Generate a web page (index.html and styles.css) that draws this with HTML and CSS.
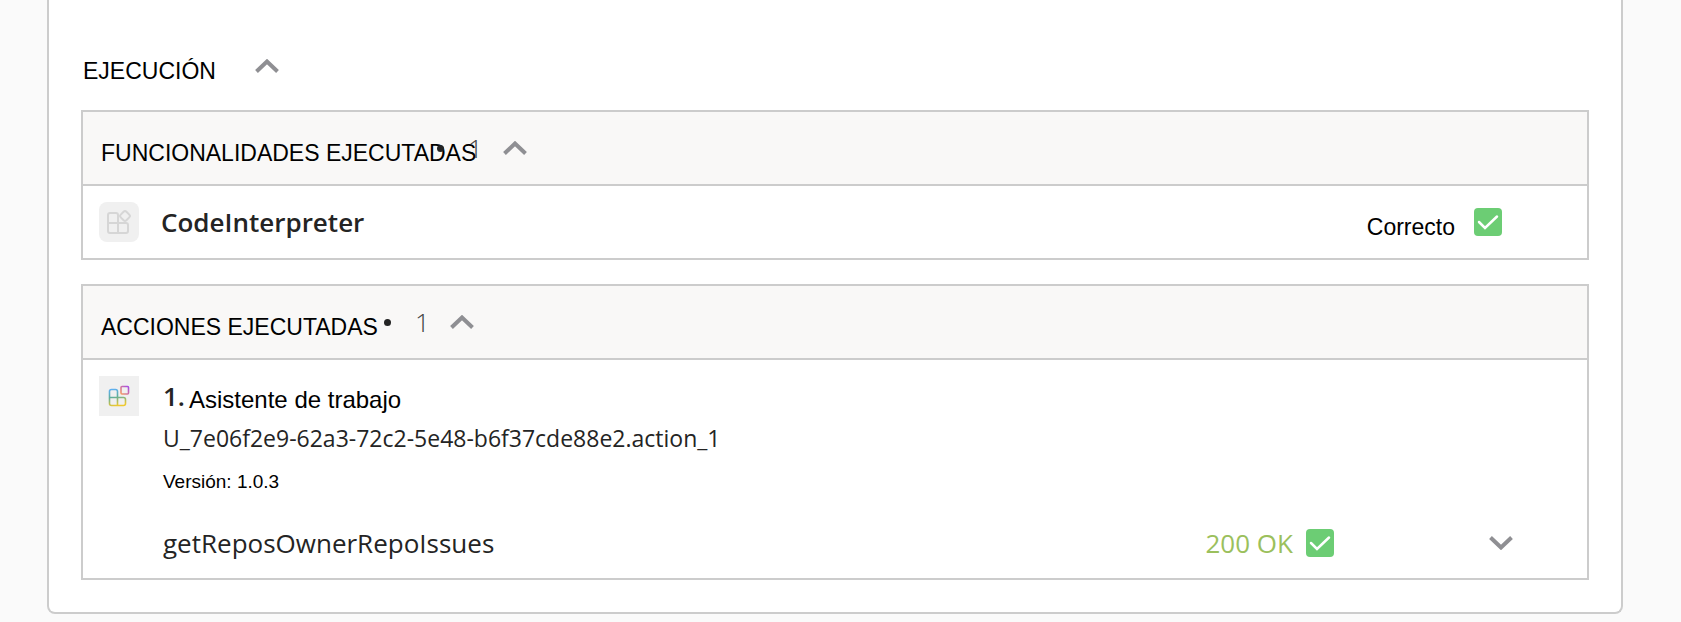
FILE: index.html
```html
<!DOCTYPE html>
<html lang="es">
<head>
    <meta charset="UTF-8">
    <meta name="viewport" content="width=device-width, initial-scale=1.0">
    <title>Ejecución</title>
    <link rel="stylesheet" href="styles.css">
</head>
<body>

    <main class="card">
        <div class="section-head">
            <h1 class="label">EJECUCIÓN</h1>
            <button class="toggle" type="button" aria-label="Contraer ejecución">
                <svg width="24" height="14" viewBox="0 0 24 14"><path d="M1.5 12.5 12 2.5l10.5 10"/></svg>
            </button>
        </div>

        <section class="panel">
            <div class="panel-head">
                <h2 class="label label-overflow">FUNCIONALIDADES EJECUTADAS</h2>
                <span class="dot"></span>
                <span class="count">1</span>
                <button class="toggle" type="button" aria-label="Contraer funcionalidades">
                    <svg width="24" height="14" viewBox="0 0 24 14"><path d="M1.5 12.5 12 2.5l10.5 10"/></svg>
                </button>
            </div>
            <div class="row">
                <span class="app-icon app-icon-round">
                    <svg width="26" height="26" viewBox="0 0 26 26" fill="none" stroke="#d6d6d6" stroke-width="2">
                        <path d="M12 14V6a2 2 0 0 0-2-2H4a2 2 0 0 0-2 2v16a2 2 0 0 0 2 2h16a2 2 0 0 0 2-2v-6a2 2 0 0 0-2-2H2M12 14v10"/>
                        <rect x="15" y="3" width="8" height="8" rx="2" transform="rotate(45 19 7)"/>
                    </svg>
                </span>
                <span class="skill-name">CodeInterpreter</span>
                <span class="status status-skill">
                    <span class="label">Correcto</span>
                    <svg class="check" width="28" height="28" viewBox="0 0 28 28"><rect width="28" height="28" rx="4"/><path d="M5 14l6 6L23 8.5"/></svg>
                </span>
            </div>
        </section>

        <section class="panel">
            <div class="panel-head">
                <h2 class="label">ACCIONES EJECUTADAS</h2>
                <span class="dot"></span>
                <span class="count">1</span>
                <button class="toggle" type="button" aria-label="Contraer acciones">
                    <svg width="24" height="14" viewBox="0 0 24 14"><path d="M1.5 12.5 12 2.5l10.5 10"/></svg>
                </button>
            </div>
            <div class="action">
                <span class="app-icon">
                    <svg width="22" height="22" viewBox="0 0 22 22" fill="none" stroke-width="1.6">
                        <defs>
                            <linearGradient id="blocks" gradientUnits="userSpaceOnUse" x1="4" y1="3" x2="8" y2="21">
                                <stop offset="0" stop-color="#5fb0ff"/>
                                <stop offset="0.5" stop-color="#5fae9c"/>
                                <stop offset="1" stop-color="#efc92f"/>
                            </linearGradient>
                            <linearGradient id="corner" x1="1" y1="0" x2="0" y2="1">
                                <stop offset="0" stop-color="#a44be8"/>
                                <stop offset="1" stop-color="#f59a62"/>
                            </linearGradient>
                        </defs>
                        <path stroke="url(#blocks)" d="M9.5 12.500V6.500A2 2 0 0 0 7.500 4.500h-4A2 2 0 0 0 1.500 6.500v12a2 2 0 0 0 2 2h12a2 2 0 0 0 2-2v-4a2 2 0 0 0-2-2h-14M9.500 12.500v8"/>
                        <rect stroke="url(#corner)" x="13" y="1.500" width="7.500" height="7.500" rx="1"/>
                    </svg>
                </span>
                <div class="details">
                    <div class="action-title">
                        <span class="number">1.</span>
                        <span class="label action-name">Asistente de trabajo</span>
                    </div>
                    <div class="action-id">U_7e06f2e9-62a3-72c2-5e48-b6f37cde88e2.action_1</div>
                    <div class="version">Versión: 1.0.3</div>
                </div>
            </div>
            <div class="row row-operation">
                <span class="operation">getReposOwnerRepoIssues</span>
                <span class="status status-http">
                    <span class="http-code">200 OK</span>
                    <svg class="check" width="28" height="28" viewBox="0 0 28 28"><rect width="28" height="28" rx="4"/><path d="M5 14l6 6L23 8.5"/></svg>
                </span>
                <button class="toggle" type="button" aria-label="Mostrar detalles">
                    <svg width="24" height="14" viewBox="0 0 24 14"><path d="M1.5 1.5 12 11.5l10.5-10"/></svg>
                </button>
            </div>
        </section>
    </main>

</body>
</html>
```
FILE: styles.css
```css
* {
    box-sizing: border-box;
}

body {
    margin: 0;
    background-color: #fafafa;
    color: #242424;
    font-family: "Open Sans", "Noto Sans", sans-serif;
}

.card {
    margin: 0 58px 8px 47px;
    padding: 30px 32px 32px;
    background-color: #fff;
    border: 2px solid #ccc;
    border-top: none;
    border-radius: 0 0 8px 8px;
}

.section-head {
    display: flex;
    align-items: center;
    gap: 39px;
    height: 72px;
    margin-bottom: 8px;
    padding-left: 2px;
}

/* Labels sit a little below the middle of their row */
.label {
    margin: 0;
    padding-top: 10px;
    font-family: "Liberation Sans", Arial, sans-serif;
    font-size: 23px;
    font-weight: normal;
    line-height: 32px;
    color: #000;
    white-space: nowrap;
}

.toggle {
    display: flex;
    padding: 0;
    border: none;
    background: none;
    cursor: pointer;
}

.toggle path {
    fill: none;
    stroke: #8f8f93;
    stroke-width: 4;
}

/* Panels */
.panel {
    border: 2px solid #ccc;
}

.panel + .panel {
    margin-top: 24px;
}

.panel-head {
    display: flex;
    align-items: center;
    height: 74px;
    padding-left: 18px;
    background-color: #f9f8f7;
    border-bottom: 2px solid #ccc;
}

.label-overflow {
    width: 330px;
}

.dot {
    width: 7px;
    height: 7px;
    margin-left: 6px;
    border-radius: 50%;
    background-color: #242424;
}

.count {
    margin: 0 20px 0 24px;
    font-size: 26px;
    font-weight: 300;
    line-height: 32px;
    color: #424242;
}

.row {
    display: flex;
    align-items: center;
    height: 72px;
    padding-left: 16px;
}

.app-icon {
    display: flex;
    flex-shrink: 0;
    align-items: center;
    justify-content: center;
    width: 40px;
    height: 40px;
    background-color: #f0f0f0;
}

.app-icon-round {
    border-radius: 8px;
}

.skill-name {
    margin-left: 22px;
    font-size: 26px;
    font-weight: 600;
}

.status {
    display: flex;
    align-items: center;
    margin-left: auto;
}

.status-skill {
    gap: 19px;
    margin-right: 85px;
}

.status-http {
    gap: 13px;
    margin-right: 155px;
}

.check rect {
    fill: #6ccd74;
}

.check path {
    fill: none;
    stroke: #fff;
    stroke-width: 2.5;
    stroke-linecap: round;
}

/* Executed action */
.action {
    display: flex;
    gap: 24px;
    padding: 16px 16px 4px;
}

.action-title {
    display: flex;
    align-items: center;
    gap: 4px;
    height: 40px;
}

.number {
    font-size: 26px;
    font-weight: 600;
}

.action-name {
    padding-top: 8px;
    font-size: 24px;
}

.action-id {
    font-size: 23px;
    line-height: 44px;
}

.version {
    font-family: "Liberation Sans", Arial, sans-serif;
    font-size: 19px;
    line-height: 44px;
    color: #000;
}

.row-operation {
    height: 70px;
    padding: 0 74px 0 80px;
}

.operation,
.http-code {
    font-size: 26px;
}

.http-code {
    color: #9bc05c;
}
```
